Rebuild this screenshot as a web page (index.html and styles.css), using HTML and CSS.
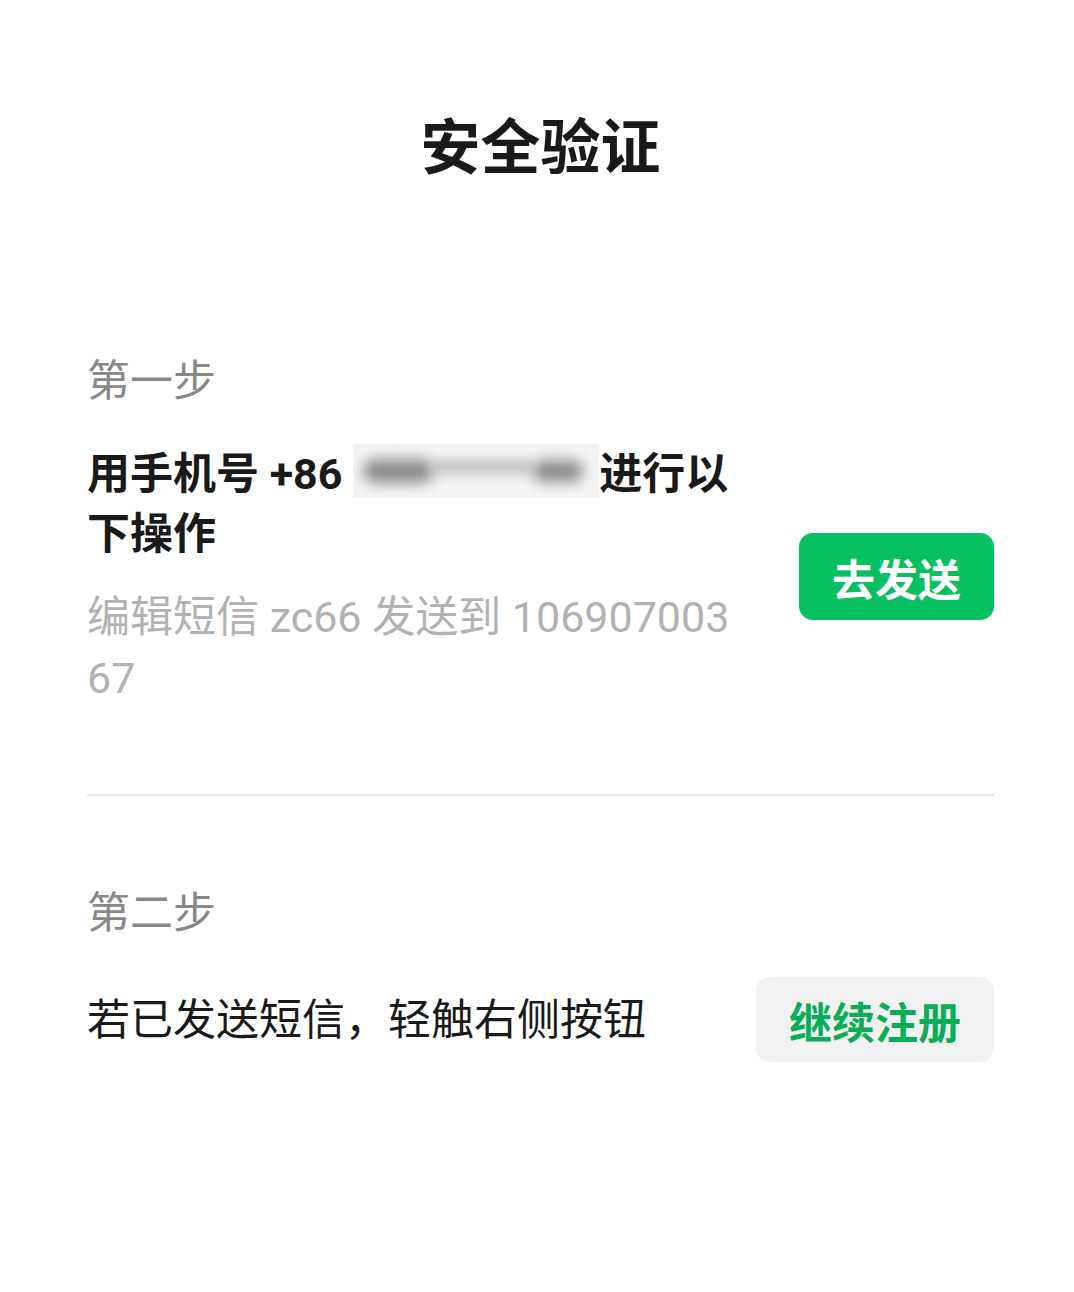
FILE: index.html
```html
<!DOCTYPE html>
<html lang="zh-CN">
<head>
<meta charset="utf-8">
<title>安全验证</title>
<link rel="stylesheet" href="styles.css">
</head>
<body>
<main class="page">
  <h1 class="title">安全验证</h1>

  <section class="step step-first">
    <div class="step-label">第一步</div>
    <div class="step-row">
      <div class="step-text">
        <p class="instruction">用手机号 +86 <span class="masked" aria-hidden="true"><span class="blob blob-left"></span><span class="blob blob-mid"></span><span class="blob blob-right"></span></span>进行以下操作</p>
        <p class="hint">编辑短信 zc66 发送到 10690700367</p>
      </div>
      <button class="btn btn-primary" type="button">去发送</button>
    </div>
  </section>

  <hr class="divider">

  <section class="step step-second">
    <div class="step-label">第二步</div>
    <div class="step-row">
      <p class="plain">若已发送短信，轻触右侧按钮</p>
      <button class="btn btn-secondary" type="button">继续注册</button>
    </div>
  </section>
</main>
</body>
</html>
```

FILE: styles.css
```css
html, body {
  margin: 0;
  padding: 0;
  background: #ffffff;
}

body {
  font-family: Roboto, "Noto Sans CJK SC", "Noto Sans", sans-serif;
  color: #1a1a1a;
  font-size: 43px;
}

.page {
  padding: 109px 80px 0 87px;
}

.title {
  margin: 0;
  font-size: 60px;
  line-height: 80px;
  font-weight: 700;
  text-align: center;
  color: #1a1a1a;
}

.step-first {
  margin-top: 162px;
}

.step-label {
  font-size: 43px;
  line-height: 60px;
  color: #888888;
}

.step-row {
  display: flex;
  align-items: center;
  gap: 57px;
}

.step-first .step-row {
  margin-top: 33px;
}

.step-text {
  flex: 1;
  min-width: 0;
}

.instruction {
  margin: 0;
  font-weight: 700;
  line-height: 60px;
  color: #1a1a1a;
}

.masked {
  display: inline-block;
  width: 246px;
  height: 54px;
  padding: 0 10px;
  box-sizing: border-box;
  vertical-align: -9px;
  background: #f4f4f4;
  overflow: hidden;
  line-height: 54px;
  font-size: 0;
  white-space: nowrap;
}

.blob {
  display: inline-block;
  vertical-align: middle;
  background: #8c8c8c;
  filter: blur(7px);
}

.blob-left {
  width: 70px;
  height: 24px;
  border-radius: 12px;
}

.blob-mid {
  width: 100px;
  height: 8px;
  margin-bottom: 8px;
  background: #9a9a9a;
}

.blob-right {
  width: 50px;
  height: 22px;
  border-radius: 11px;
}

.hint {
  margin: 23px 0 0;
  line-height: 61px;
  color: #b2b2b2;
  word-break: break-all;
}

.btn {
  font: inherit;
  font-weight: 700;
  font-size: 43px;
  border: none;
  border-radius: 14px;
  padding: 0 33px;
  flex: none;
  display: flex;
  align-items: center;
  justify-content: center;
  cursor: pointer;
}

.btn-primary {
  height: 87px;
  background: #07c160;
  color: #ffffff;
}

.btn-secondary {
  height: 85px;
  background: #f2f2f2;
  color: #06ae56;
}

.divider {
  margin: 85px 0 0;
  border: none;
  height: 2px;
  background: #e6e6e6;
}

.step-second {
  margin-top: 87px;
}

.step-second .step-row {
  margin-top: 34px;
  justify-content: space-between;
}

.plain {
  margin: 0;
  line-height: 60px;
  color: #1a1a1a;
}
```
